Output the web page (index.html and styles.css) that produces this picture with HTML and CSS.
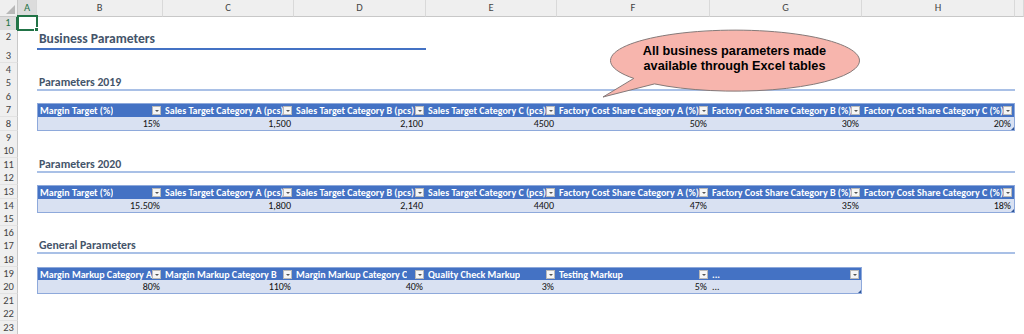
FILE: index.html
```html
<!DOCTYPE html>
<html lang="en">
<head>
  <meta charset="UTF-8" />
  <title>Business Parameters</title>
  <link rel="stylesheet" href="styles.css">
</head>
<body>

  <div class="sheet">
    <!-- Column headers -->
    <div class="row colhead">
      <div class="corner"></div>
      <div class="ch sel">A</div>
      <div class="ch">B</div>
      <div class="ch">C</div>
      <div class="ch">D</div>
      <div class="ch">E</div>
      <div class="ch">F</div>
      <div class="ch">G</div>
      <div class="ch">H</div>
      <div class="ch"></div>
    </div>

    <div class="row r1"><div class="rn sel">1</div><div class="cell active"></div></div>

    <div class="row r2">
      <div class="rn">2</div><div></div>
      <div class="h1">Business Parameters</div>
    </div>
    <div class="row"><div class="rn">3</div></div>
    <div class="row"><div class="rn">4</div></div>
    <div class="row">
      <div class="rn">5</div><div></div>
      <div class="h2">Parameters 2019</div>
    </div>
    <div class="row"><div class="rn">6</div></div>

    <!-- Table 2019 -->
    <div class="row">
      <div class="rn">7</div><div></div>
      <div class="th first"><span>Margin Target (%)</span><i class="dd"></i></div>
      <div class="th"><span>Sales Target Category A (pcs)</span><i class="dd"></i></div>
      <div class="th"><span>Sales Target Category B (pcs)</span><i class="dd"></i></div>
      <div class="th"><span>Sales Target Category C (pcs)</span><i class="dd"></i></div>
      <div class="th"><span>Factory Cost Share Category A (%)</span><i class="dd"></i></div>
      <div class="th"><span>Factory Cost Share Category B (%)</span><i class="dd"></i></div>
      <div class="th last"><span>Factory Cost Share Category C (%)</span><i class="dd"></i></div>
    </div>
    <div class="row">
      <div class="rn">8</div><div></div>
      <div class="td first">15%</div>
      <div class="td">1,500</div>
      <div class="td">2,100</div>
      <div class="td">4500</div>
      <div class="td">50%</div>
      <div class="td">30%</div>
      <div class="td last">20%</div>
    </div>
    <div class="row"><div class="rn">9</div></div>
    <div class="row"><div class="rn">10</div></div>
    <div class="row">
      <div class="rn">11</div><div></div>
      <div class="h2">Parameters 2020</div>
    </div>
    <div class="row"><div class="rn">12</div></div>

    <!-- Table 2020 -->
    <div class="row">
      <div class="rn">13</div><div></div>
      <div class="th first"><span>Margin Target (%)</span><i class="dd"></i></div>
      <div class="th"><span>Sales Target Category A (pcs)</span><i class="dd"></i></div>
      <div class="th"><span>Sales Target Category B (pcs)</span><i class="dd"></i></div>
      <div class="th"><span>Sales Target Category C (pcs)</span><i class="dd"></i></div>
      <div class="th"><span>Factory Cost Share Category A (%)</span><i class="dd"></i></div>
      <div class="th"><span>Factory Cost Share Category B (%)</span><i class="dd"></i></div>
      <div class="th last"><span>Factory Cost Share Category C (%)</span><i class="dd"></i></div>
    </div>
    <div class="row">
      <div class="rn">14</div><div></div>
      <div class="td first">15.50%</div>
      <div class="td">1,800</div>
      <div class="td">2,140</div>
      <div class="td">4400</div>
      <div class="td">47%</div>
      <div class="td">35%</div>
      <div class="td last">18%</div>
    </div>
    <div class="row"><div class="rn">15</div></div>
    <div class="row"><div class="rn">16</div></div>
    <div class="row">
      <div class="rn">17</div><div></div>
      <div class="h2">General Parameters</div>
    </div>
    <div class="row"><div class="rn">18</div></div>

    <!-- General table -->
    <div class="row">
      <div class="rn">19</div><div></div>
      <div class="th first"><span>Margin Markup Category A</span><i class="dd"></i></div>
      <div class="th"><span>Margin Markup Category B</span><i class="dd"></i></div>
      <div class="th"><span>Margin Markup Category C</span><i class="dd"></i></div>
      <div class="th"><span>Quality Check Markup</span><i class="dd"></i></div>
      <div class="th"><span>Testing Markup</span><i class="dd"></i></div>
      <div class="th last"><span>...</span><i class="dd"></i></div>
    </div>
    <div class="row">
      <div class="rn">20</div><div></div>
      <div class="td first">80%</div>
      <div class="td">110%</div>
      <div class="td">40%</div>
      <div class="td">3%</div>
      <div class="td">5%</div>
      <div class="td last text">...</div>
    </div>
    <div class="row"><div class="rn">21</div></div>
    <div class="row"><div class="rn">22</div></div>
    <div class="row"><div class="rn">23</div></div>
  </div>

  <!-- Callout shape over the sheet -->
  <div class="callout">
    <svg class="bubble" width="270" height="80" viewBox="0 0 270 80">
      <path d="M37.8 52.4 A124.5 30.5 0 1 1 58.5 57.9 L7 71 Z" fill="#f7b5ad" stroke="#857a79" stroke-width="1"/>
    </svg>
    <div class="callout-text">All business parameters made<br>available through Excel tables</div>
  </div>

</body>
</html>
```
FILE: styles.css
```css
body {
  margin: 0;
  font-family: Carlito, Lato, sans-serif;
  background: white;
  position: relative;
  height: 334px;
  overflow: hidden;
}

.row {
  display: grid;
  grid-template-columns: 18px 19px 126px 131px 132px 131px 153px 152px 153px 1fr;
  height: 13.6px;
}

.row > div {
  box-sizing: border-box;
  min-width: 0;
}

/* headers */
.colhead {
  height: 16px;
}

.corner {
  background: #efefef;
  border-right: 1px solid #c8c8c8;
  border-bottom: 1px solid #c8c8c8;
  position: relative;
}

.corner::after {
  content: '';
  position: absolute;
  right: 2px;
  bottom: 2px;
  border-left: 9px solid transparent;
  border-bottom: 9px solid #b8b8b8;
}

.ch {
  background: #efefef;
  border-right: 1px solid #d9d9d9;
  border-bottom: 1px solid #c8c8c8;
  color: #444;
  font-size: 10.5px;
  text-align: center;
  line-height: 15px;
}

.ch.sel {
  background: #dcdcdc;
  color: #217346;
  border-bottom: 2px solid #217346;
}

.rn {
  background: #efefef;
  border-right: 1px solid #c8c8c8;
  border-bottom: 1px solid #e2e2e2;
  color: #444;
  font-size: 10.5px;
  text-align: center;
  line-height: 13px;
  grid-column: 1;
}

.rn.sel {
  background: #dcdcdc;
  color: #217346;
  border-right: 2px solid #217346;
}

.r1 {
  height: 14px;
}

.r2 {
  height: 19px;
}

.cell.active {
  border: 2px solid #217346;
  margin: -1px 0 0 -1px;
  width: 21px;
  height: 16px;
  position: relative;
}

.cell.active::after {
  content: '';
  position: absolute;
  right: -3px;
  bottom: -3px;
  width: 3px;
  height: 3px;
  background: #217346;
  border: 1px solid white;
}

/* headings */
.h1 {
  grid-column: 3 / 6;
  border-bottom: 2px solid #4472c4;
  color: #44546a;
  font-weight: bold;
  font-size: 13.6px;
  display: flex;
  align-items: flex-end;
  padding: 0 0 1px 2px;
}

.h2 {
  grid-column: 3 / 10;
  border-bottom: 2px solid #a9c0e6;
  color: #44546a;
  font-weight: bold;
  font-size: 11.8px;
  display: flex;
  align-items: flex-end;
  padding: 0 0 0 2px;
  line-height: 13px;
}

/* tables */
.th {
  background: #4472c4;
  color: white;
  font-weight: bold;
  font-size: 10px;
  border-top: 1px solid #8ea9db;
  display: flex;
  align-items: center;
  justify-content: space-between;
  padding-left: 2px;
  white-space: nowrap;
  overflow: hidden;
}

.th span {
  overflow: hidden;
}

.td {
  background: #d9e1f2;
  font-size: 10px;
  color: #111;
  border-bottom: 1px solid #8ea9db;
  text-align: right;
  padding-right: 3px;
  line-height: 13px;
}

.td.text {
  text-align: left;
  padding-left: 2px;
}

.first {
  border-left: 1px solid #8ea9db;
}

.last {
  border-right: 1px solid #8ea9db;
  position: relative;
}

.td.last::after {
  content: '';
  position: absolute;
  right: 0;
  bottom: 0;
  border-left: 3px solid transparent;
  border-bottom: 3px solid #2f5597;
}

.dd {
  flex: none;
  width: 9px;
  height: 9px;
  box-sizing: border-box;
  background: #f6f6f6;
  border: 1px solid #b9b9b9;
  margin-right: 2px;
  position: relative;
}

.dd::after {
  content: '';
  position: absolute;
  left: 2px;
  top: 3px;
  border-left: 2px solid transparent;
  border-right: 2px solid transparent;
  border-top: 2px solid #555;
}

/* callout */
.callout {
  position: absolute;
  left: 596px;
  top: 26px;
  width: 270px;
  height: 80px;
}

.bubble {
  position: absolute;
  left: 0;
  top: 0;
}

.callout-text {
  position: relative;
  width: 249px;
  margin-left: 14px;
  padding-top: 18px;
  text-align: center;
  font-family: "Liberation Sans", Arial, sans-serif;
  font-weight: bold;
  font-size: 12.7px;
  line-height: 15px;
  color: #000;
}
```
